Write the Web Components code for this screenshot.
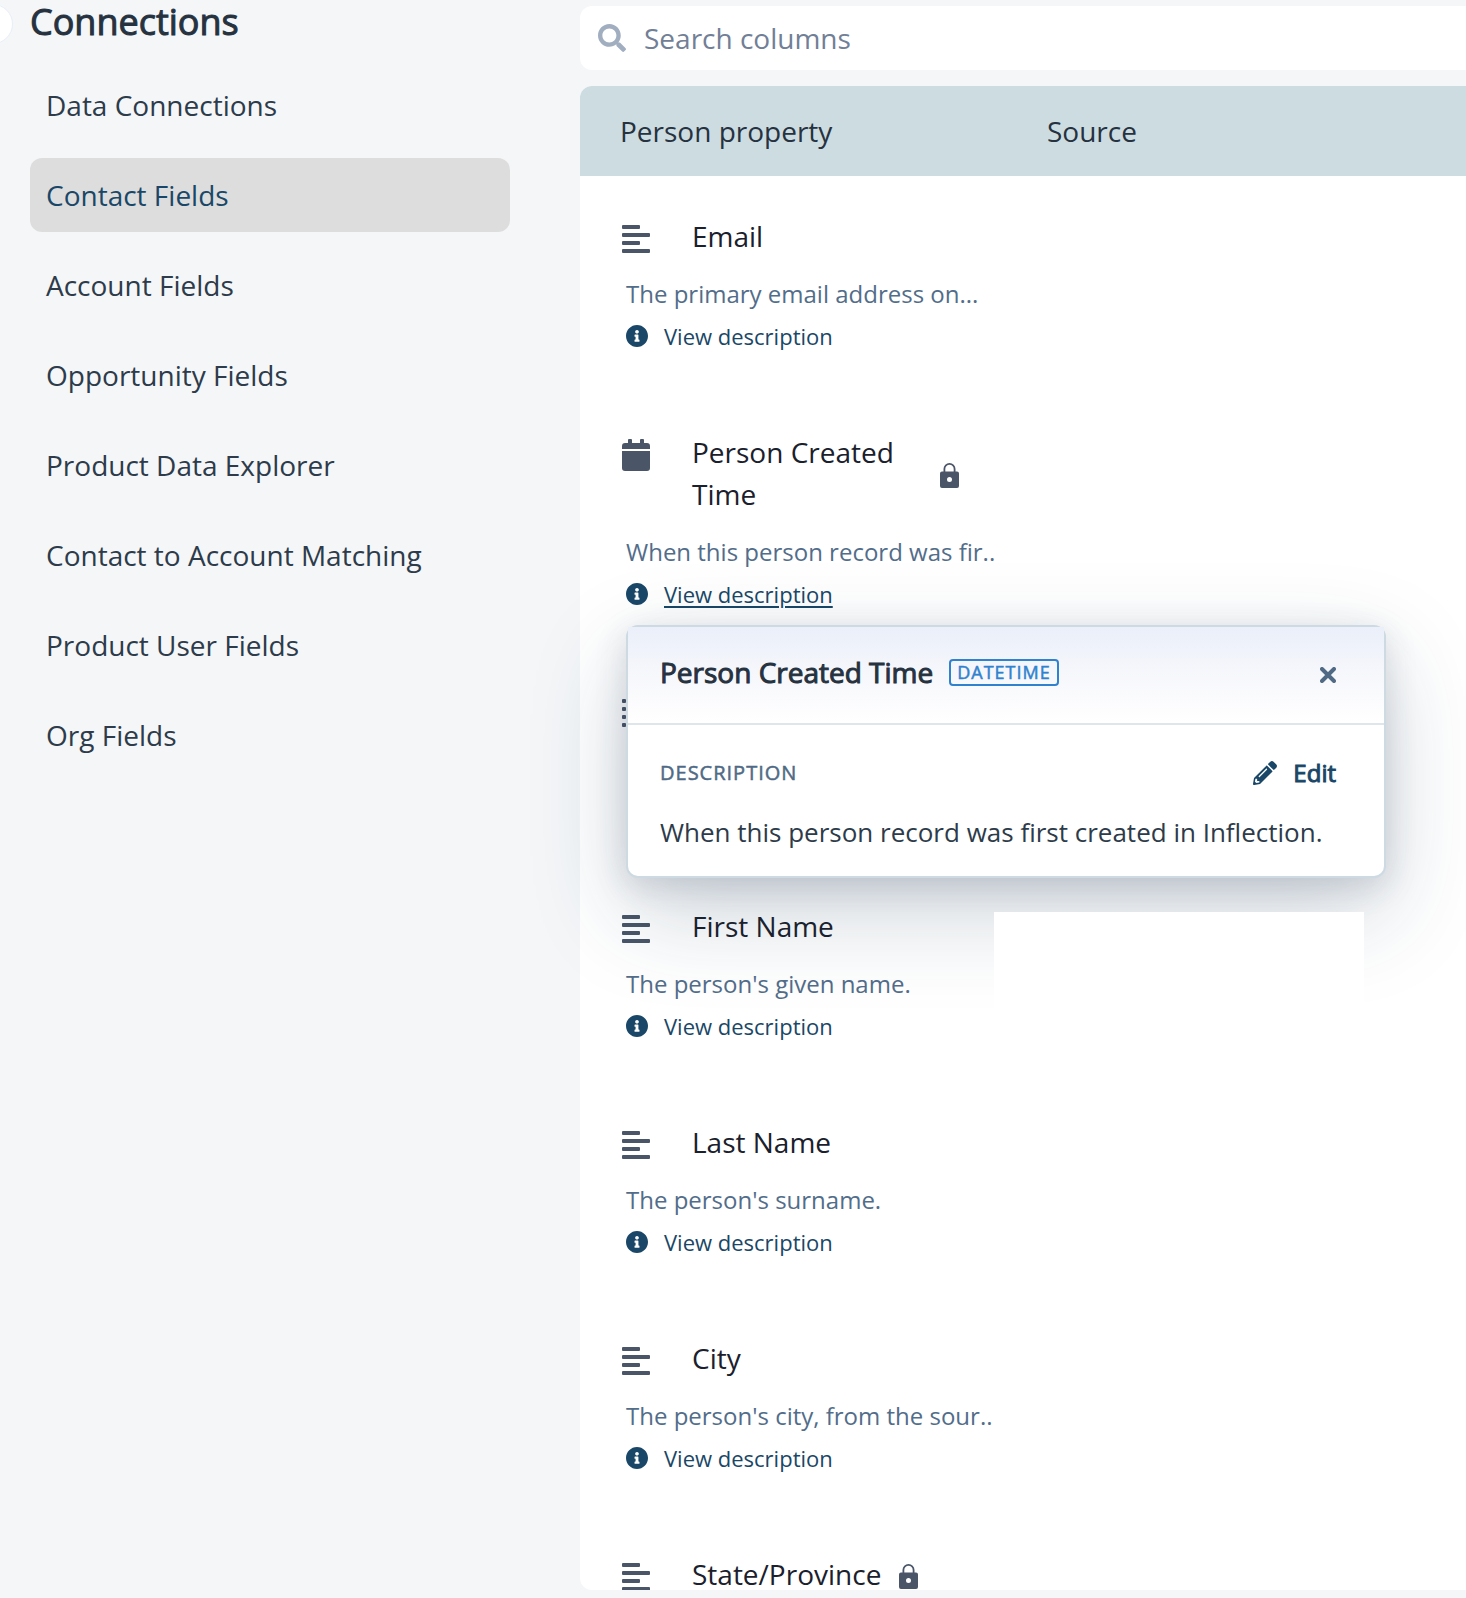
<!DOCTYPE html>
<html lang="en">
<head>
<meta charset="utf-8">
<meta name="viewport" content="width=device-width, initial-scale=1">
<title>Contact Fields</title>
<style>
  body {
    margin: 0;
    background: #f4f6f8;
    font-family: "Open Sans", "Noto Sans", sans-serif;
    font-size: 28px;
    line-height: 42px;
    color: #2d3b4a;
  }
</style>
</head>
<body>
<app-shell>
  <side-nav slot="nav" heading="Connections">
    <nav-item>Data Connections</nav-item>
    <nav-item selected>Contact Fields</nav-item>
    <nav-item>Account Fields</nav-item>
    <nav-item>Opportunity Fields</nav-item>
    <nav-item>Product Data Explorer</nav-item>
    <nav-item>Contact to Account Matching</nav-item>
    <nav-item>Product User Fields</nav-item>
    <nav-item>Org Fields</nav-item>
  </side-nav>
  <search-box placeholder="Search columns"></search-box>
  <field-table></field-table>
  <field-popover slot="overlay" heading="Person Created Time" type="DATETIME">
    When this person record was first created in Inflection.
  </field-popover>
</app-shell>

<script>
const icons = {
  text: `<svg viewBox="0 0 32 32" width="32" height="32" fill="currentColor">
    <rect x="2" y="2" width="18" height="4" rx="1"/><rect x="2" y="10" width="28" height="4" rx="1"/>
    <rect x="2" y="18" width="18" height="4" rx="1"/><rect x="2" y="26" width="28" height="4" rx="1"/></svg>`,
  date: `<svg viewBox="0 0 32 32" width="32" height="32" fill="currentColor">
    <path d="M2 10V7a3 3 0 0 1 3-3h3V1a1 1 0 0 1 1-1h2a1 1 0 0 1 1 1v3h8V1a1 1 0 0 1 1-1h2a1 1 0 0 1 1 1v3h3a3 3 0 0 1 3 3v3z"/>
    <path d="M2 12h28v17a3 3 0 0 1-3 3H5a3 3 0 0 1-3-3z"/></svg>`,
  list: `<svg viewBox="0 0 32 32" width="32" height="32" fill="currentColor">
    <rect x="2" y="2" width="4" height="4" rx="1"/><rect x="2" y="10" width="4" height="4" rx="1"/>
    <rect x="2" y="18" width="4" height="4" rx="1"/><rect x="2" y="26" width="4" height="4" rx="1"/>
    <path d="M10 2h20v4H10zM10 10h20v4H10zM10 18h20v4H10zM10 26h20v4H10z"/></svg>`,
  lock: `<svg viewBox="0 0 19 25" width="19" height="25" fill="currentColor">
    <path fill-rule="evenodd" d="M3.500 8.500V6a6 6 0 0 1 12 0v2.500H17a2 2 0 0 1 2 2V23a2 2 0 0 1-2 2H2a2 2 0 0 1-2-2V10.500a2 2 0 0 1 2-2zM5.300 8.500h8.400V6a4.200 4.200 0 0 0-8.400 0zM9.500 14a2.500 2.500 0 1 0 0 5 2.500 2.500 0 0 0 0-5z"/></svg>`,
  info: `<svg viewBox="8 8 496 496" width="22" height="22" fill="currentColor">
    <path d="M256 8C119 8 8 119 8 256s111 248 248 248 248-111 248-248S393 8 256 8zm0 110c23.200 0 42 18.800 42 42s-18.800 42-42 42-42-18.800-42-42 18.800-42 42-42zm56 254c0 6.600-5.400 12-12 12h-88c-6.600 0-12-5.400-12-12v-24c0-6.600 5.400-12 12-12h12v-64h-12c-6.600 0-12-5.400-12-12v-24c0-6.600 5.400-12 12-12h64c6.600 0 12 5.400 12 12v100h12c6.600 0 12 5.400 12 12z"/></svg>`,
  search: `<svg viewBox="0 0 512 512" width="28" height="28" fill="currentColor">
    <path d="M505 442.700L405.300 343c-4.500-4.500-10.600-7-17-7H372c27.600-35.300 44-79.700 44-128C416 93.100 322.900 0 208 0S0 93.100 0 208s93.100 208 208 208c48.300 0 92.700-16.400 128-44v16.300c0 6.400 2.500 12.500 7 17l99.700 99.700c9.400 9.400 24.600 9.400 33.900 0l28.300-28.300c9.400-9.400 9.400-24.600.1-34zM208 336c-70.700 0-128-57.200-128-128 0-70.700 57.200-128 128-128 70.700 0 128 57.200 128 128 0 70.700-57.200 128-128 128z"/></svg>`,
  close: `<svg viewBox="0 0 16 16" width="16" height="16" fill="none" stroke="currentColor" stroke-width="4" stroke-linecap="round">
    <path d="M2 2l12 12M14 2L2 14"/></svg>`,
  pencil: `<svg viewBox="0 0 512 512" width="24" height="24" fill="currentColor">
    <path d="M497.900 142.100l-46.100 46.100c-4.700 4.700-12.300 4.700-17 0l-111-111c-4.700-4.700-4.700-12.300 0-17l46.100-46.100c18.700-18.700 49.100-18.700 67.900 0l60.100 60.100c18.800 18.700 18.800 49.100 0 67.900zM284.200 99.800L21.600 362.400.4 483.900c-2.900 16.400 11.400 30.600 27.800 27.800l121.500-21.300 262.600-262.600c4.700-4.700 4.700-12.300 0-17l-111-111c-4.800-4.700-12.400-4.700-17.100 0zM124.100 339.900c-5.500-5.500-5.500-14.300 0-19.800l154-154c5.500-5.500 14.300-5.500 19.800 0s5.500 14.300 0 19.800l-154 154c-5.500 5.500-14.300 5.500-19.800 0zM88 424h48v36.300l-64.500 11.300-31.100-31.100L51.700 376H88v48z"/></svg>`
};

class AppShell extends HTMLElement {
  constructor() {
    super();
    this.attachShadow({ mode: 'open' });
    this.shadowRoot.innerHTML = `
    <style>
    :host {
      display: grid;
      grid-template-columns: 580px 1fr;
      height: 100vh;
      overflow: hidden;
    }
    main {
      position: relative;
      box-sizing: border-box;
      min-width: 0;
      min-height: 0;
      padding: 6px 0 8px;
      display: flex;
      flex-direction: column;
      gap: 16px;
    }
    </style>
    <slot name="nav"></slot>
    <main>
      <slot></slot>
      <slot name="overlay"></slot>
    </main>`;
  }
}
customElements.define('app-shell', AppShell);

class SideNav extends HTMLElement {
  constructor() {
    super();
    this.attachShadow({ mode: 'open' });
    this.shadowRoot.innerHTML = `
    <style>
    :host {
      display: block;
      position: relative;
      padding: 0 70px 0 30px;
    }
    h1 {
      margin: 0 0 24px;
      font-size: 36px;
      line-height: 44px;
      font-weight: 400;
      color: #26323f;
      -webkit-text-stroke: 1px currentColor;
    }
    nav {
      display: flex;
      flex-direction: column;
      gap: 16px;
    }
    /* collapse handle, hangs over the window edge */
    button {
      position: absolute;
      left: -27px;
      top: 4px;
      width: 40px;
      height: 40px;
      border: 1px solid #e8eff7;
      border-radius: 50%;
      background: #fff;
    }
    </style>
    <button type="button" aria-label="Collapse menu"></button>
    <h1>${this.getAttribute('heading')}</h1>
    <nav><slot></slot></nav>`;
  }
}
customElements.define('side-nav', SideNav);

class NavItem extends HTMLElement {
  constructor() {
    super();
    this.attachShadow({ mode: 'open' });
    this.shadowRoot.innerHTML = `
    <style>
    :host {
      display: block;
    }
    a {
      display: block;
      padding: 16px;
      border-radius: 12px;
      color: #2d3b4a;
      text-decoration: none;
    }
    :host([selected]) a {
      background: #ddd;
      color: #1a4767;
    }
    </style>
    <a href="#"><slot></slot></a>`;
  }
}
customElements.define('nav-item', NavItem);

class SearchBox extends HTMLElement {
  constructor() {
    super();
    this.attachShadow({ mode: 'open' });
    this.shadowRoot.innerHTML = `
    <style>
    :host {
      display: block;
      flex: none;
    }
    label {
      display: flex;
      align-items: center;
      gap: 18px;
      height: 64px;
      padding-left: 18px;
      border-radius: 12px 0 0 12px;
      background: #fff;
      color: #a0aec0;
    }
    svg {
      flex: none;
    }
    input {
      flex: 1;
      min-width: 0;
      padding: 0;
      border: 0;
      outline: 0;
      background: none;
      font: inherit;
      color: #2d3b4a;
    }
    input::placeholder {
      color: #718096;
      opacity: 1;
    }
    </style>
    <label>${icons.search}<input type="text" aria-label="Search columns" placeholder="${this.getAttribute('placeholder')}"></label>`;
  }
}
customElements.define('search-box', SearchBox);

class FieldCell extends HTMLElement {
  constructor() {
    super();
    this.attachShadow({ mode: 'open' });
  }
  connectedCallback() {
    const locked = this.hasAttribute('locked');
    const text = this.getAttribute('description');
    this.shadowRoot.innerHTML = `
    <style>
    :host {
      display: block;
      color: #1a202c;
    }
    .title {
      display: flex;
      align-items: flex-start;
      min-height: 42px;
    }
    .type {
      display: flex;
      margin: 8px 40px 0 0;
      color: #4a5568;
    }
    .name {
      max-width: 230px;
    }
    .lock {
      display: flex;
      align-self: center;
      margin: 4px 0 0 18px;
      color: #4a5568;
    }
    p {
      margin: 19px 0 7px 6px;
      font-size: 24px;
      line-height: 36px;
      color: #526d8a;
      white-space: nowrap;
    }
    button {
      display: flex;
      align-items: center;
      gap: 16px;
      margin-left: 6px;
      padding: 0;
      border: 0;
      background: none;
      font: inherit;
      font-size: 22px;
      line-height: 34px;
      color: #1a4767;
    }
    :host([open]) button span {
      text-decoration: underline;
      text-decoration-thickness: 2px;
      text-underline-offset: 3px;
    }
    </style>
    <div class="title">
      <span class="type">${icons[this.getAttribute('type')]}</span>
      <span class="name">${this.getAttribute('name')}</span>
      ${locked ? `<span class="lock">${icons.lock}</span>` : ''}
    </div>
    ${text ? `<p>${text}</p><button type="button">${icons.info}<span>View description</span></button>` : ''}`;
  }
}
customElements.define('field-cell', FieldCell);

const fields = [
  { type: 'text', name: 'Email', description: 'The primary email address on...' },
  { type: 'date', name: 'Person Created Time', description: 'When this person record was fir..', flags: 'locked open' },
  { type: 'list', name: '', description: '' },
  { type: 'text', name: 'First Name', description: "The person's given name.", blank: true },
  { type: 'text', name: 'Last Name', description: "The person's surname." },
  { type: 'text', name: 'City', description: "The person's city, from the sour.." },
  { type: 'text', name: 'State/Province', description: '', flags: 'locked' }
];

class FieldTable extends HTMLElement {
  constructor() {
    super();
    this.attachShadow({ mode: 'open' });
    this.shadowRoot.innerHTML = `
    <style>
    :host {
      display: block;
      flex: 1;
      min-height: 0;
      overflow: hidden;
      border-radius: 12px 0 0 12px;
      background: #fff;
    }
    table {
      width: 100%;
      table-layout: fixed;
      border-collapse: collapse;
    }
    .property {
      width: 427px;
    }
    th {
      height: 90px;
      padding: 0 0 0 40px;
      background: #cddce1;
      font-weight: 400;
      text-align: left;
      color: #26323f;
    }
    td {
      height: 216px;
      box-sizing: border-box;
      padding: 39px 0 36px 40px;
      vertical-align: top;
    }
    /* the name on this row runs over two lines */
    .tall td {
      height: 258px;
    }
    .source {
      position: relative;
    }
    .blank {
      position: absolute;
      z-index: 3;
      left: -13px;
      top: 46px;
      width: 370px;
      height: 160px;
      background: #fff;
    }
    </style>
    <table>
      <colgroup><col class="property"><col></colgroup>
      <thead><tr><th scope="col">Person property</th><th scope="col">Source</th></tr></thead>
      <tbody>${fields.map(f => `
        <tr class="${f.type === 'date' ? 'tall' : ''}">
          <td><field-cell type="${f.type}" name="${f.name}" description="${f.description}" ${f.flags || ''}></field-cell></td>
          <td class="source">${f.blank ? '<div class="blank"></div>' : ''}</td>
        </tr>`).join('')}
      </tbody>
    </table>`;
  }
}
customElements.define('field-table', FieldTable);

class FieldPopover extends HTMLElement {
  constructor() {
    super();
    this.attachShadow({ mode: 'open' });
    this.shadowRoot.innerHTML = `
    <style>
    :host {
      position: absolute;
      z-index: 2;
      left: 46px;
      top: 625px;
      box-sizing: border-box;
      width: 760px;
      border: 2px solid #cddae1;
      border-radius: 12px;
      background: #fff;
      box-shadow: 0 8px 32px rgba(45, 55, 85, .16), 0 34px 96px rgba(26, 60, 85, .22);
    }
    header,
    .label {
      display: flex;
      align-items: center;
    }
    header {
      height: 96px;
      padding: 0 48px 0 32px;
      border-bottom: 2px solid #dfe6eb;
      background: linear-gradient(#eaeff9, #f0f3fb 25%, #f5f6fb 40%, #fff);
    }
    h2 {
      margin: 0 16px 6px 0;
      font-size: 28px;
      line-height: 42px;
      font-weight: 400;
      color: #26323f;
      -webkit-text-stroke: 1px currentColor;
    }
    .type {
      margin-bottom: 6px;
      padding: 0 6px;
      border: 2px solid #3182ce;
      border-radius: 4px;
      font-size: 18px;
      line-height: 23px;
      letter-spacing: 1px;
      color: #3182ce;
      -webkit-text-stroke: 0.5px currentColor;
    }
    button {
      display: flex;
      align-items: center;
      gap: 16px;
      margin-left: auto;
      padding: 0;
      border: 0;
      background: none;
      font: inherit;
      color: #506a85;
    }
    .body {
      padding: 30px 48px 24px 32px;
    }
    h3 {
      margin: 0;
      font-size: 20px;
      line-height: 36px;
      font-weight: 400;
      letter-spacing: 1px;
      color: #506a85;
      -webkit-text-stroke: 0.5px currentColor;
    }
    .edit {
      font-size: 24px;
      line-height: 36px;
      color: #1a4767;
      -webkit-text-stroke: 1px currentColor;
    }
    .edit svg {
      -webkit-text-stroke: 0;
    }
    p {
      margin: 21px 0 0;
      font-size: 26px;
      line-height: 40px;
      white-space: nowrap;
    }
    </style>
    <header>
      <h2>${this.getAttribute('heading')}</h2>
      <span class="type">${this.getAttribute('type')}</span>
      <button type="button" aria-label="Close">${icons.close}</button>
    </header>
    <div class="body">
      <div class="label">
        <h3>DESCRIPTION</h3>
        <button type="button" class="edit">${icons.pencil}Edit</button>
      </div>
      <p><slot></slot></p>
    </div>`;
    this.shadowRoot.querySelector('[aria-label="Close"]').addEventListener('click', this._close.bind(this));
  }
  _close() {
    this.remove();
  }
}
customElements.define('field-popover', FieldPopover);
</script>
</body>
</html>
